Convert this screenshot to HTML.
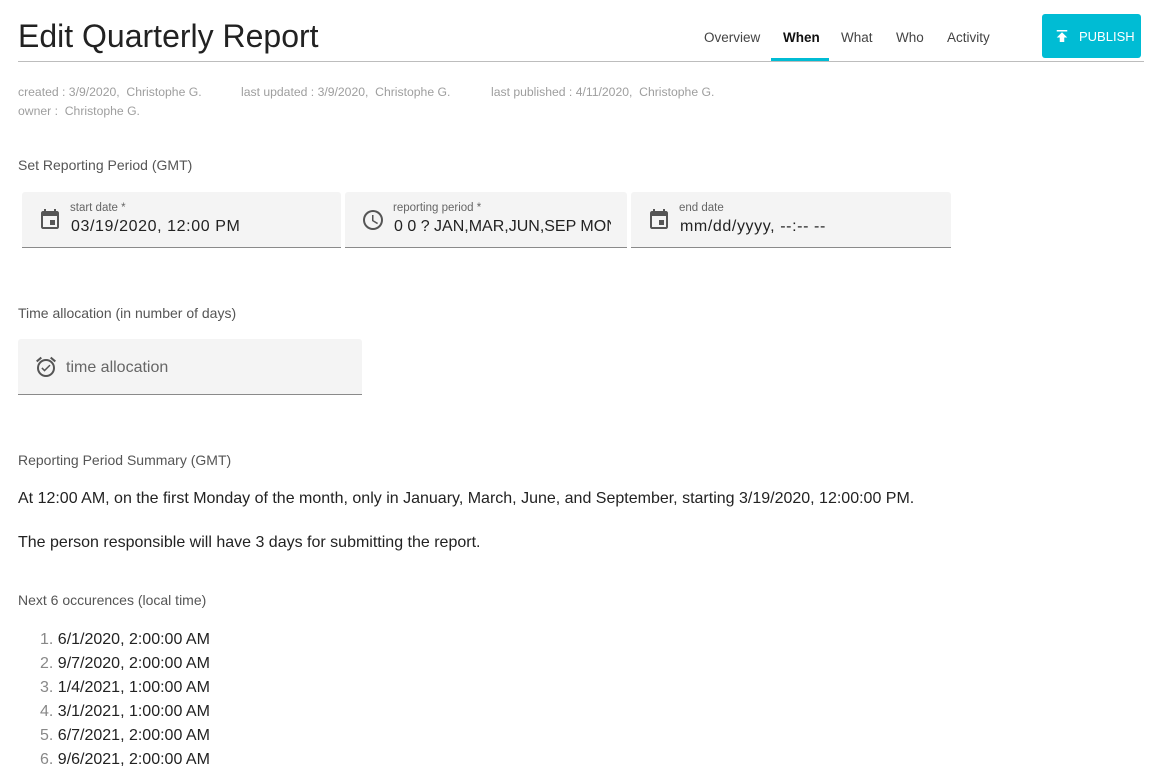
<!DOCTYPE html>
<html><head><style>
body{margin:0;background:#fff;font-family:"Liberation Sans",Arial,sans-serif;color:#222;width:1156px;height:777px;overflow:hidden;position:relative}
.a{position:absolute;white-space:nowrap}
.title{left:18px;top:18px;font-size:32px;color:#222}
.hl{left:18px;top:61px;width:1126px;height:1px;background:#bdbdbd}
.tab{top:30px;font-size:13.5px;color:#444}
.ul{left:771px;top:58px;width:58px;height:3px;background:#00bcd4}
.btn{left:1042px;top:14px;width:99px;height:44px;background:#00bcd4;border-radius:3px;color:#fff;font-size:13px}
.meta{font-size:12.2px;color:#9e9e9e}
.h{font-size:14px;color:#555}
.fld{background:#f4f4f4;border-bottom:1px solid #8a8a8a;border-radius:3px 3px 0 0}
.lab{font-size:11.5px;color:#666}
.val{font-size:16px;color:#222;letter-spacing:0.6px}
.p{font-size:16px;color:#222}
.li{font-size:16px;left:40px}
.li span{color:#888}
</style></head><body>
<div class="a title">Edit Quarterly Report</div>
<div class="a hl"></div>
<div class="a tab" style="left:704px">Overview</div>
<div class="a tab" style="left:783px;color:#111;font-weight:bold">When</div>
<div class="a tab" style="left:841px">What</div>
<div class="a tab" style="left:896px">Who</div>
<div class="a tab" style="left:947px">Activity</div>
<div class="a ul"></div>
<div class="a btn">
<svg style="position:absolute;left:11px;top:13px" width="18" height="18" viewBox="0 0 24 24"><path fill="#fff" d="M5 4v2h14V4H5zm0 10h4v6h6v-6h4l-7-7-7 7z"/></svg>
<span style="position:absolute;left:37px;top:15px">PUBLISH</span></div>
<div class="a meta" style="left:18px;top:85px">created : 3/9/2020,&nbsp; Christophe G.</div>
<div class="a meta" style="left:241px;top:85px">last updated : 3/9/2020,&nbsp; Christophe G.</div>
<div class="a meta" style="left:491px;top:85px">last published : 4/11/2020,&nbsp; Christophe G.</div>
<div class="a meta" style="left:18px;top:104px">owner :&nbsp; Christophe G.</div>
<div class="a h" style="left:18px;top:157px">Set Reporting Period (GMT)</div>

<div class="a fld" style="left:22px;top:192px;width:319px;height:55px"></div>
<div class="a fld" style="left:345px;top:192px;width:282px;height:55px"></div>
<div class="a fld" style="left:631px;top:192px;width:320px;height:55px"></div>
<svg class="a" style="left:38px;top:208px" width="24" height="24" viewBox="0 0 24 24"><path fill="#555" d="M17 12h-5v5h5v-5zM16 1v2H8V1H6v2H5c-1.1 0-2 .9-2 2v14c0 1.1.9 2 2 2h14c1.1 0 2-.9 2-2V5c0-1.1-.9-2-2-2h-1V1h-2zm3 18H5V8h14v11z"/></svg>
<div class="a lab" style="left:70px;top:202px">start date *</div>
<div class="a val" style="left:71px;top:218px">03/19/2020, 12:00 PM</div>
<svg class="a" style="left:361px;top:208px" width="24" height="24" viewBox="0 0 24 24"><path fill="#555" d="M12 2a10 10 0 100 20 10 10 0 000-20zm0 18a8 8 0 110-16 8 8 0 010 16zm.5-13H11v6l5.2 3.2.8-1.3-4.5-2.7V7z"/></svg>
<div class="a lab" style="left:393px;top:202px">reporting period *</div>
<div class="a val" style="left:394px;top:218px;width:217px;overflow:hidden;letter-spacing:0">0 0 ? JAN,MAR,JUN,SEP MON#1</div>
<svg class="a" style="left:647px;top:208px" width="24" height="24" viewBox="0 0 24 24"><path fill="#555" d="M17 12h-5v5h5v-5zM16 1v2H8V1H6v2H5c-1.1 0-2 .9-2 2v14c0 1.1.9 2 2 2h14c1.1 0 2-.9 2-2V5c0-1.1-.9-2-2-2h-1V1h-2zm3 18H5V8h14v11z"/></svg>
<div class="a lab" style="left:679px;top:202px">end date</div>
<div class="a val" style="left:680px;top:218px">mm/dd/yyyy, --:-- --</div>

<div class="a h" style="left:18px;top:305px">Time allocation (in number of days)</div>
<div class="a fld" style="left:18px;top:339px;width:344px;height:55px"></div>
<svg class="a" style="left:34px;top:355px" width="24" height="24" viewBox="0 0 24 24"><path fill="#555" d="M10.54 14.53L8.41 12.4l-1.06 1.06 3.18 3.18 6-6-1.06-1.06-4.93 4.95zm6.797-12.72l4.607 3.845-1.28 1.535-4.61-3.843 1.283-1.537zM6.663 1.81l1.282 1.537-4.605 3.843-1.28-1.536L6.66 1.81zM12 4a9 9 0 100 18 9 9 0 000-18zm0 16a7 7 0 110-14 7 7 0 010 14z"/></svg>
<div class="a" style="left:66px;top:359px;font-size:16px;color:#666">time allocation</div>

<div class="a h" style="left:18px;top:452px">Reporting Period Summary (GMT)</div>
<div class="a p" style="left:18px;top:490px">At 12:00 AM, on the first Monday of the month, only in January, March, June, and September, starting 3/19/2020, 12:00:00 PM.</div>
<div class="a p" style="left:18px;top:534px">The person responsible will have 3 days for submitting the report.</div>
<div class="a h" style="left:18px;top:592px">Next 6 occurences (local time)</div>
<div class="a li" style="top:631px"><span>1.</span> 6/1/2020, 2:00:00 AM</div>
<div class="a li" style="top:655px"><span>2.</span> 9/7/2020, 2:00:00 AM</div>
<div class="a li" style="top:679px"><span>3.</span> 1/4/2021, 1:00:00 AM</div>
<div class="a li" style="top:703px"><span>4.</span> 3/1/2021, 1:00:00 AM</div>
<div class="a li" style="top:727px"><span>5.</span> 6/7/2021, 2:00:00 AM</div>
<div class="a li" style="top:751px"><span>6.</span> 9/6/2021, 2:00:00 AM</div>
</body></html>
